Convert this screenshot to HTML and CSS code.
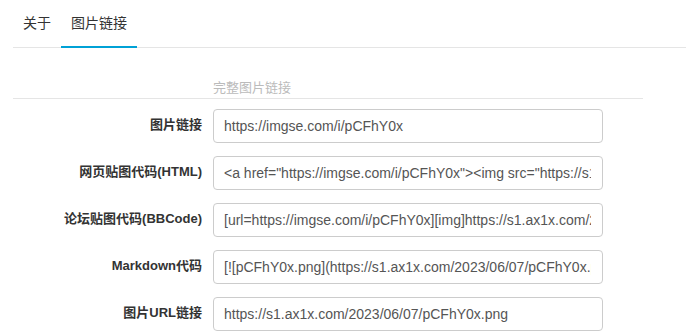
FILE: index.html
```html
<!DOCTYPE html>
<html lang="zh-CN">
  <head>
    <meta charset="UTF-8" />
    <title>图片链接</title>
    <link rel="stylesheet" href="styles.css">
  </head>
  <body>
    <div class="tabs">
      <a href="#" class="tab">关于</a>
      <a href="#" class="tab active">图片链接</a>
    </div>

    <div class="panel">
      <div class="panel-title">完整图片链接</div>
      <form class="link-form">
        <label for="link1">图片链接</label>
        <input id="link1" type="text" readonly value="https://imgse.com/i/pCFhY0x" />

        <label for="link2">网页贴图代码(HTML)</label>
        <input id="link2" type="text" readonly value='&lt;a href="https://imgse.com/i/pCFhY0x"&gt;&lt;img src="https://s1.ax1x.com/2023/06/07/pCFhY0x.png" alt="pCFhY0x.png" border="0" /&gt;&lt;/a&gt;' />

        <label for="link3">论坛贴图代码(BBCode)</label>
        <input id="link3" type="text" readonly value="[url=https://imgse.com/i/pCFhY0x][img]https://s1.ax1x.com/2023/06/07/pCFhY0x.png[/img][/url]" />

        <label for="link4">Markdown代码</label>
        <input id="link4" type="text" readonly value="[![pCFhY0x.png](https://s1.ax1x.com/2023/06/07/pCFhY0x.png)](https://imgse.com/i/pCFhY0x)" />

        <label for="link5">图片URL链接</label>
        <input id="link5" type="text" readonly value="https://s1.ax1x.com/2023/06/07/pCFhY0x.png" />
      </form>
    </div>
  </body>
</html>
```

FILE: styles.css
```css
body {
  margin: 0;
  padding-left: 13px;
  font-family: "Liberation Sans", "Noto Sans CJK SC", sans-serif;
  color: #333;
  background-color: #fff;
}

/* Tabs */
.tabs {
  display: flex;
  height: 47px;
  border-bottom: 1px solid #e5e5e5;
}

.tab {
  display: block;
  height: 46px;
  line-height: 46px;
  padding: 0 10px;
  margin-bottom: -1px;
  font-size: 14px;
  color: #333;
  text-decoration: none;
  border-bottom: 2px solid transparent;
}

.tab.active {
  border-bottom-color: #00a1d6;
}

/* Panel */
.panel {
  width: 630px;
}

.panel-title {
  margin-top: 30px;
  padding-left: 200px;
  line-height: 20px;
  font-size: 13px;
  color: #bbb;
  border-bottom: 1px solid #e5e5e5;
}

.link-form {
  display: grid;
  grid-template-columns: 200px 390px;
  row-gap: 13px;
  margin-top: 10px;
}

.link-form label {
  padding-right: 11px;
  line-height: 32px;
  text-align: right;
  font-size: 13px;
  font-weight: bold;
  color: #333;
}

.link-form input {
  box-sizing: border-box;
  width: 390px;
  height: 34px;
  padding: 6px 11px 6px 10px;
  font-family: "Liberation Sans", "Noto Sans CJK SC", sans-serif;
  font-size: 14px;
  color: #555;
  background-color: #fff;
  border: 1px solid #ccc;
  border-radius: 4px;
  outline: none;
}
```
